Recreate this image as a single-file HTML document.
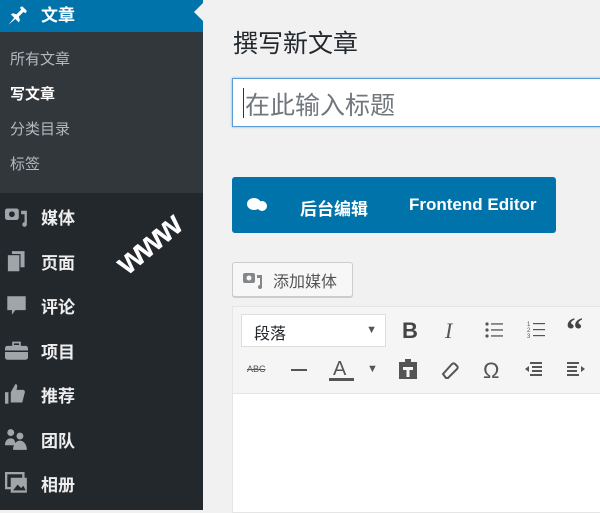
<!DOCTYPE html><html><head><meta charset="utf-8"><style>
*{margin:0;padding:0;box-sizing:border-box}
body{width:600px;height:510px;overflow:hidden;background:#f1f1f1;font-family:"Liberation Sans","Noto Sans CJK SC",sans-serif;position:relative}
#sb{position:absolute;left:0;top:0;width:203px;height:510px;background:#23282d}
.top{position:absolute;left:0;top:0;width:203px;height:32px;background:#0073aa;color:#fff;font-size:17px;font-weight:bold}
.top span{position:absolute;left:41px;top:1px}
.arrow{position:absolute;right:0;top:3px;width:0;height:0;border-top:9px solid transparent;border-bottom:9px solid transparent;border-right:9px solid #f1f1f1}
.sub{position:absolute;left:0;top:32px;width:203px;height:161px;background:#32373c}
.sub div{position:absolute;left:10px;font-size:15px;color:#b4b9be}
.item{position:absolute;left:41px;font-size:17px;color:#eee;font-weight:bold}
.ic{position:absolute;left:5px;width:23px;height:23px}
h1{position:absolute;left:233px;top:24px;font-size:25px;font-weight:normal;color:#23282d}
.title{position:absolute;left:232px;top:78px;width:380px;height:49px;background:#fff;border:1px solid #5b9dd9;box-shadow:0 0 2px rgba(30,140,190,.6)}
.title span{position:absolute;left:12px;top:7px;font-size:25px;color:#72777c}
.title i{position:absolute;left:10px;top:9px;width:1px;height:30px;background:#333}
.blue{position:absolute;left:232px;top:177px;width:324px;height:56px;background:#0073aa;border-radius:3px;color:#fff;font-size:17px;font-weight:bold}
.media{position:absolute;left:232px;top:262px;width:121px;height:35px;background:#f7f7f7;border:1px solid #ccc;border-radius:3px;box-shadow:0 1px 0 #ccc;font-size:16px;color:#555}
.tb{position:absolute;left:232px;top:306px;width:380px;height:88px;background:#f5f5f5;border:1px solid #e5e5e5}
.ed{position:absolute;left:232px;top:393px;width:380px;height:120px;background:#fff;border:1px solid #e5e5e5}
.sel{position:absolute;left:241px;top:314px;width:145px;height:33px;background:#fff;border:1px solid #ddd;font-size:16px;color:#23282d}
.t{position:absolute;color:#555;font-size:20px}
</style></head><body>
<div id="sb">
<div class="top"><svg class="ic" style="top:4px" viewBox="0 0 20 20"><path d="M3 18l5-6-3-3 2-1 3 1 4-4-1-2 2-1 4 4-1 2-2-1-4 4 1 3-1 2-3-3z" fill="#fff"/></svg><span>文章</span><div class="arrow"></div></div>
<div class="sub"><div style="top:16px">所有文章</div><div style="top:51px;color:#fff;font-weight:bold">写文章</div><div style="top:86px">分类目录</div><div style="top:121px">标签</div></div>
<svg class="ic" style="top:205px" viewBox="0 0 20 20"><rect x="0" y="3" width="12" height="10" rx="2" fill="#a0a5aa"/><circle cx="6" cy="8" r="2.5" fill="#23282d"/><path d="M14 5h5v12a2 2 0 1 1-2-2V8h-3z" fill="#a0a5aa"/></svg><div class="item" style="top:204px">媒体</div>
<svg class="ic" style="top:250px" viewBox="0 0 20 20"><rect x="6" y="1" width="11" height="14" fill="#a0a5aa"/><rect x="2" y="4" width="11" height="15" fill="#a0a5aa" stroke="#23282d" stroke-width="1"/></svg><div class="item" style="top:249px">页面</div>
<svg class="ic" style="top:294px" viewBox="0 0 20 20"><path d="M2 2h16v12H9l-3 4v-4H2z" fill="#a0a5aa"/></svg><div class="item" style="top:293px">评论</div>
<svg class="ic" style="top:339px" viewBox="0 0 20 20"><path d="M7 3h6v3H7z" fill="none" stroke="#a0a5aa" stroke-width="1.5"/><rect x="0" y="6" width="20" height="12" rx="2" fill="#a0a5aa"/><rect x="0" y="10" width="20" height="1.3" fill="#23282d"/></svg><div class="item" style="top:338px">项目</div>
<svg class="ic" style="top:383px" viewBox="0 0 20 20"><rect x="0" y="8" width="3" height="10" fill="#a0a5aa"/><path d="M5 8l4-7c2 0 2 2 1 5h6a2 2 0 0 1 1 3l-2 8H5z" fill="#a0a5aa"/></svg><div class="item" style="top:382px">推荐</div>
<svg class="ic" style="top:428px" viewBox="0 0 20 20"><circle cx="5" cy="4" r="3" fill="#a0a5aa"/><circle cx="13" cy="7" r="3" fill="#a0a5aa"/><path d="M0 15c0-4 2-6 5-6s4 2 4 6z M7 19c0-5 3-8 6-8s6 3 6 8z" fill="#a0a5aa"/></svg><div class="item" style="top:427px">团队</div>
<svg class="ic" style="top:472px" viewBox="0 0 20 20"><rect x="1" y="1" width="15" height="13" fill="none" stroke="#a0a5aa" stroke-width="2"/><rect x="5" y="5" width="14" height="13" fill="#a0a5aa"/><path d="M7 16l4-5 3 3 2-2 2 4z" fill="#23282d"/></svg><div class="item" style="top:471px">相册</div>
</div>
<div style="position:absolute;left:112px;top:225px;transform:rotate(-40deg);color:#fff;font-size:34px;font-weight:bold;letter-spacing:-2px">www</div>
<h1>撰写新文章</h1>
<div class="title"><i></i><span>在此输入标题</span></div>
<div class="blue"><svg style="position:absolute;left:14px;top:20px" width="22" height="16" viewBox="0 0 22 16"><ellipse cx="8" cy="7" rx="7" ry="6" fill="#fff"/><ellipse cx="16" cy="9" rx="5" ry="5" fill="#fff"/></svg><span style="position:absolute;left:68px;top:18px">后台编辑</span><span style="position:absolute;left:177px;top:18px">Frontend Editor</span></div>
<div class="media"><svg style="position:absolute;left:10px;top:7px" width="20" height="20" viewBox="0 0 20 20"><rect x="0" y="3" width="12" height="10" rx="2" fill="#82878c"/><circle cx="6" cy="8" r="2.5" fill="#f7f7f7"/><path d="M14 5h5v12a2 2 0 1 1-2-2V8h-3z" fill="#82878c"/></svg><span style="position:absolute;left:40px;top:5px">添加媒体</span></div>
<div class="tb"></div>
<div class="ed"></div>
<div class="sel"><span style="position:absolute;left:12px;top:5px">段落</span><span style="position:absolute;right:8px;top:9px;font-size:11px;color:#555">▼</span></div>
<div class="t" style="left:402px;top:318px;font-weight:bold;font-size:22px;color:#444">B</div>
<div class="t" style="left:445px;top:318px;font-style:italic;font-family:'Liberation Serif',serif;font-size:22px">I</div>
<svg style="position:absolute;left:485px;top:322px" width="18" height="16"><g fill="#555"><circle cx="2" cy="2" r="1.6"/><circle cx="2" cy="8" r="1.6"/><circle cx="2" cy="14" r="1.6"/><rect x="6" y="1.3" width="12" height="1.3"/><rect x="6" y="7.3" width="12" height="1.3"/><rect x="6" y="13.3" width="12" height="1.3"/></g></svg>
<svg style="position:absolute;left:527px;top:320px" width="18" height="18"><g fill="#555"><text x="0" y="6" font-size="6">1</text><text x="0" y="12" font-size="6">2</text><text x="0" y="18" font-size="6">3</text><rect x="6" y="3" width="12" height="1.2"/><rect x="6" y="9" width="12" height="1.2"/><rect x="6" y="15" width="12" height="1.2"/></g></svg>
<div class="t" style="left:566px;top:312px;font-weight:bold;font-size:34px;font-family:'Liberation Serif',serif;color:#444">“</div>
<div class="t" style="left:247px;top:364px;font-size:9px;text-decoration:line-through">ABC</div>
<div style="position:absolute;left:291px;top:369px;width:16px;height:2px;background:#555"></div>
<div class="t" style="left:333px;top:358px;font-size:20px">A</div>
<div style="position:absolute;left:329px;top:378px;width:25px;height:3px;background:#555"></div>
<div class="t" style="left:367px;top:363px;font-size:11px">▼</div>
<svg style="position:absolute;left:398px;top:358px" width="20" height="22" viewBox="0 0 20 22"><rect x="1" y="4" width="18" height="17" fill="#555"/><rect x="7" y="1" width="6" height="4" fill="#555"/><path d="M5 9h10v3h-3.5v7h-3v-7H5z" fill="#f5f5f5"/></svg>
<svg style="position:absolute;left:440px;top:360px" width="20" height="20" viewBox="0 0 20 20"><path d="M3 14l9-10a2 2 0 0 1 3 0l2 2a2 2 0 0 1 0 3l-9 9H6z" fill="none" stroke="#555" stroke-width="2"/></svg>
<div class="t" style="left:483px;top:358px;font-size:22px">Ω</div>
<svg style="position:absolute;left:524px;top:360px" width="20" height="20"><g fill="#555"><rect x="6" y="2" width="12" height="2"/><rect x="8" y="6" width="10" height="2"/><rect x="8" y="10" width="10" height="2"/><rect x="6" y="14" width="12" height="2"/><path d="M1 9l4-3v6z"/></g></svg>
<svg style="position:absolute;left:567px;top:360px" width="20" height="20"><g fill="#555"><rect x="0" y="2" width="12" height="2"/><rect x="0" y="6" width="10" height="2"/><rect x="0" y="10" width="10" height="2"/><rect x="0" y="14" width="12" height="2"/><path d="M18 9l-4-3v6z"/></g></svg>
</body></html>
